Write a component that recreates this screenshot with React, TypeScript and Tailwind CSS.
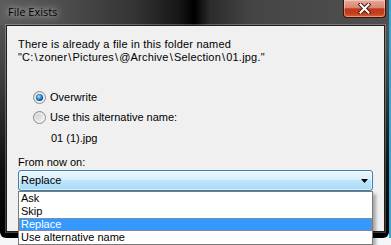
import React, { useId } from "react";

function Radio({ checked }: { checked?: boolean }) {
  const id = useId().replace(/:/g, "");
  return (
    <svg width="13" height="13" viewBox="0 0 13 13" className="shrink-0">
      <defs>
        <linearGradient id={`r${id}`} x1="0" y1="0" x2="1" y2="1">
          <stop offset="0" stopColor="#c9c9c9" />
          <stop offset="1" stopColor="#f7f7f7" />
        </linearGradient>
        <radialGradient id={`d${id}`} cx="0.42" cy="0.38" r="0.62">
          <stop offset="0" stopColor="#b4ecff" />
          <stop offset="0.45" stopColor="#3a9be0" />
          <stop offset="1" stopColor="#0d3d7c" />
        </radialGradient>
      </defs>
      <circle cx="6.5" cy="6.5" r="6" fill={`url(#r${id})`} stroke="#8c8c8c" strokeWidth="1" />
      <circle cx="6.5" cy="6.5" r="4.5" fill="none" stroke="#ffffff" strokeOpacity="0.6" strokeWidth="1" />
      {checked && <circle cx="6.5" cy="6.5" r="3.6" fill={`url(#d${id})`} />}
    </svg>
  );
}

function Bs() {
  return <span className="px-[1px]">\</span>;
}

export default function App() {
  return (
    <div className="w-[391px] h-[245px] overflow-hidden bg-[#f4f7f9] flex font-['Liberation_Sans',Tahoma,sans-serif] text-[11px] leading-[13px] text-black">
      <div className="w-[389px] h-[238px] shrink-0 flex flex-col rounded-b-[6px] bg-[linear-gradient(to_bottom,#5e5e5e_0%,#3c3c3c_35%,#101010_70%,#000_100%)]">
        <div className="h-[25px] shrink-0 flex items-start justify-between bg-[linear-gradient(90deg,#5c5c5c_0%,#4f4f4f_15%,#333333_35%,#161616_46%,#000000_50%,#2c2c2c_54%,#454545_65%,#505050_100%)]">
          <span className="ml-[8px] mt-[4px] font-['Open_Sans',sans-serif] text-[11px] leading-[15px] text-black [text-shadow:0_0_6px_rgba(255,255,255,0.8),0_0_12px_rgba(255,255,255,0.6)]">
            File Exists
          </span>
          <div className="mr-[3px] w-[43px] h-[18px] flex items-center justify-center rounded-b-[4px] border border-t-0 border-[#3b1008] bg-[linear-gradient(to_bottom,#e9a99a_0%,#d98570_45%,#c0391b_52%,#c63e1c_80%,#e0603a_100%)] shadow-[inset_0_0_0_1px_rgba(255,255,255,0.35)]">
            <svg width="13" height="11" viewBox="0 0 13 11">
              <path d="M2.5 1.5 L10.5 9.5 M10.5 1.5 L2.5 9.5" stroke="#4a1a10" strokeWidth="4" strokeLinecap="square" />
              <path d="M2.5 1.5 L10.5 9.5 M10.5 1.5 L2.5 9.5" stroke="#ffffff" strokeWidth="2" strokeLinecap="square" />
            </svg>
          </div>
        </div>
        <div className="flex-1 flex pl-[6px] pr-[4px] pb-[6px]">
          <div className="flex-1 flex flex-col border border-[#1e1e1e] bg-[#f0f0f0] pl-[11px] pt-[12px] shadow-[0_0_0_1px_rgba(255,255,255,0.25)]">
            <div className="tracking-[0.2px]">There is already a file in this folder named</div>
            <div className="tracking-[0.2px]">
              "C:<Bs />zoner<Bs />Pictures<Bs />@Archive<Bs />Selection<Bs />01.jpg."
            </div>
            <div className="mt-[27px] pl-[15px] flex items-center gap-[4px]">
              <Radio checked />
              <span>Overwrite</span>
            </div>
            <div className="mt-[7px] pl-[15px] flex items-center gap-[4px]">
              <Radio />
              <span>Use this alternative name:</span>
            </div>
            <div className="mt-[8px] pl-[33px]">01 (1).jpg</div>
            <div className="mt-[11px]">From now on:</div>
            <div className="relative mt-[1px] w-[355px] h-[21px] rounded-[3px] border border-[#3c7fb1] bg-[linear-gradient(to_bottom,#eaf6fd_0%,#d9f0fc_45%,#bee6fd_50%,#a7d9f5_100%)] shadow-[inset_0_0_0_1px_rgba(255,255,255,0.55)] flex items-center justify-between pl-[2px] pr-[3px]">
              <span>Replace</span>
              <svg width="7" height="4" viewBox="0 0 7 4" className="mr-[1px]">
                <path d="M0 0 H7 L3.5 4 Z" fill="#000" />
              </svg>
              <div className="absolute top-[20px] left-[-1px] w-[355px] bg-white border border-[#7a7a7a] shadow-[3px_3px_3px_rgba(0,0,0,0.3)] flex flex-col">
                <div className="h-[13px] pl-[2px]">Ask</div>
                <div className="h-[13px] pl-[2px]">Skip</div>
                <div className="h-[13px] pl-[2px] bg-[#3399ff] text-white outline-1 outline-dotted outline-[#d0803a] -outline-offset-1">Replace</div>
                <div className="h-[13px] pl-[2px]">Use alternative name</div>
              </div>
            </div>
          </div>
        </div>
      </div>
      <div className="w-[2px] h-[238px] shrink-0 bg-[#34a7d8]" />
    </div>
  );
}
